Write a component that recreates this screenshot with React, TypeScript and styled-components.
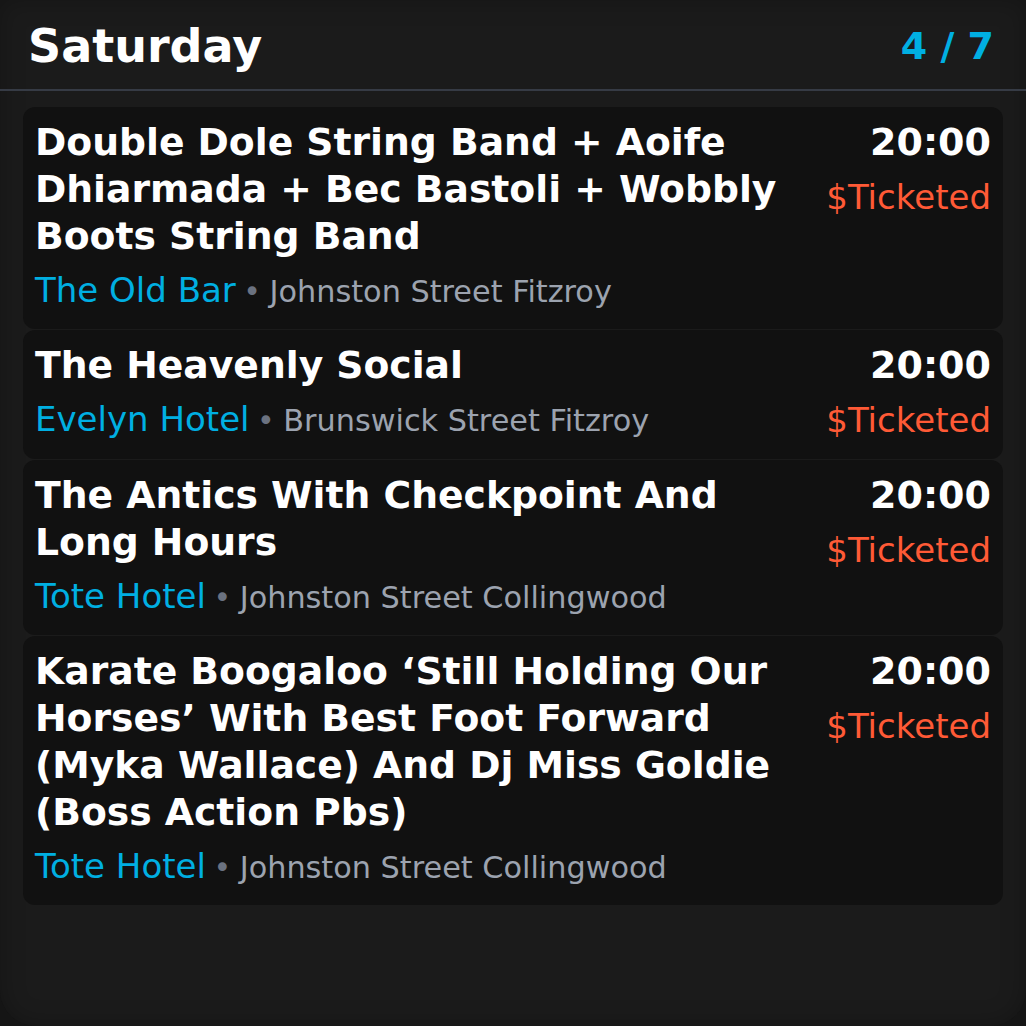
import React from "react";
import styled, { createGlobalStyle } from "styled-components";

const Global = createGlobalStyle`
  html, body { margin: 0; padding: 0; background: #151515; }
  body { font-family: "DejaVu Sans", "Noto Sans", sans-serif; }
`;

const Screen = styled.div`
  width: 1026px;
  height: 1026px;
  box-sizing: border-box;
  background: #1b1b1b;
  border-radius: 0 0 36px 36px;
  box-shadow: inset 0 0 24px rgba(0, 0, 0, 0.25);
  overflow: hidden;
  display: flex;
  flex-direction: column;
`;

const Header = styled.header`
  display: flex;
  align-items: center;
  justify-content: space-between;
  padding: 19px 32px 16px 28px;
  border-bottom: 2px solid #363b45;
`;

const DayTitle = styled.h1`
  margin: 0;
  font-size: 46px;
  font-weight: 700;
  color: #ffffff;
  line-height: normal;
`;

const PageCount = styled.span`
  font-size: 38px;
  font-weight: 700;
  color: #00afe2;
`;

const List = styled.div`
  display: flex;
  flex-direction: column;
  gap: 1px;
  padding: 16px 23px 0 23px;
`;

const Card = styled.article`
  display: flex;
  gap: 20px;
  background: #111111;
  border-radius: 12px;
  padding: 12px 12px 19px 12px;
`;

const Info = styled.div`
  flex: 1;
  min-width: 0;
`;

const Title = styled.div`
  font-size: 37.7px;
  font-weight: 700;
  line-height: 47px;
  color: #ffffff;
`;

const VenueLine = styled.div`
  margin-top: 10px;
  font-size: 34px;
  line-height: normal;
  white-space: nowrap;
`;

const Venue = styled.span`
  color: #00afe2;
`;

const Bullet = styled.span`
  font-size: 30px;
  color: #6b7280;
  margin: 0 -1px 0 -2px;
`;

const Address = styled.span`
  font-size: 30.3px;
  color: #9ca3af;
`;

const Side = styled.div`
  flex-shrink: 0;
  display: flex;
  flex-direction: column;
  align-items: flex-end;
`;

const Time = styled.div`
  font-size: 38px;
  font-weight: 700;
  line-height: 47px;
  color: #ffffff;
`;

const Price = styled.div`
  margin-top: 11px;
  font-size: 34px;
  line-height: normal;
  color: #ff5a36;
`;

type Gig = {
  title: string;
  venue: string;
  address: string;
  time: string;
  price: string;
};

const gigs: Gig[] = [
  {
    title: "Double Dole String Band + Aoife Dhiarmada + Bec Bastoli + Wobbly Boots String Band",
    venue: "The Old Bar",
    address: "Johnston Street Fitzroy",
    time: "20:00",
    price: "$Ticketed",
  },
  {
    title: "The Heavenly Social",
    venue: "Evelyn Hotel",
    address: "Brunswick Street Fitzroy",
    time: "20:00",
    price: "$Ticketed",
  },
  {
    title: "The Antics With Checkpoint And Long Hours",
    venue: "Tote Hotel",
    address: "Johnston Street Collingwood",
    time: "20:00",
    price: "$Ticketed",
  },
  {
    title:
      "Karate Boogaloo \u2018Still Holding Our Horses\u2019 With Best Foot Forward (Myka Wallace) And Dj Miss Goldie (Boss Action Pbs)",
    venue: "Tote Hotel",
    address: "Johnston Street Collingwood",
    time: "20:00",
    price: "$Ticketed",
  },
];

export default function App() {
  return (
    <>
      <Global />
      <Screen>
        <Header>
          <DayTitle>Saturday</DayTitle>
          <PageCount>4 / 7</PageCount>
        </Header>
        <List>
          {gigs.map((g, i) => (
            <Card key={i}>
              <Info>
                <Title>{g.title}</Title>
                <VenueLine>
                  <Venue>{g.venue}</Venue>
                  <Bullet> • </Bullet>
                  <Address>{g.address}</Address>
                </VenueLine>
              </Info>
              <Side>
                <Time>{g.time}</Time>
                <Price>{g.price}</Price>
              </Side>
            </Card>
          ))}
        </List>
      </Screen>
    </>
  );
}
